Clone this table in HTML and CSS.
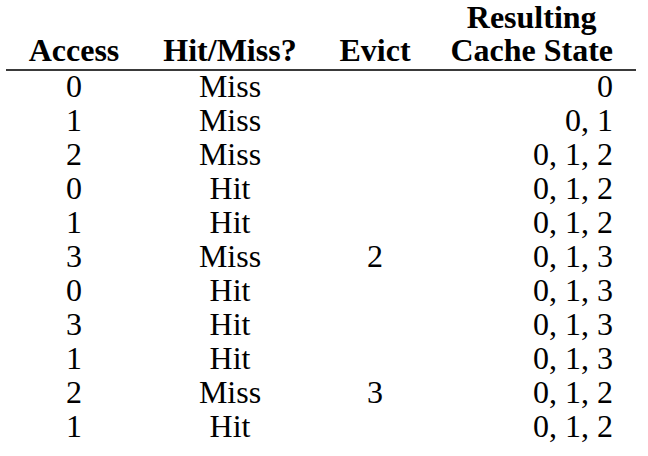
FILE: index.html
```html
<!DOCTYPE html>
<html>
<head>
<meta charset="utf-8">
<link rel="stylesheet" href="styles.css">
</head>
<body>
<div class="table">
  <div class="row head">
    <div class="cell">Access</div>
    <div class="cell">Hit/Miss?</div>
    <div class="cell">Evict</div>
    <div class="cell state"><span class="stack">Resulting<br>Cache State</span></div>
  </div>
  <div class="row"><div class="cell">0</div><div class="cell">Miss</div><div class="cell"></div><div class="cell state">0</div></div>
  <div class="row"><div class="cell">1</div><div class="cell">Miss</div><div class="cell"></div><div class="cell state">0, 1</div></div>
  <div class="row"><div class="cell">2</div><div class="cell">Miss</div><div class="cell"></div><div class="cell state">0, 1, 2</div></div>
  <div class="row"><div class="cell">0</div><div class="cell">Hit</div><div class="cell"></div><div class="cell state">0, 1, 2</div></div>
  <div class="row"><div class="cell">1</div><div class="cell">Hit</div><div class="cell"></div><div class="cell state">0, 1, 2</div></div>
  <div class="row"><div class="cell">3</div><div class="cell">Miss</div><div class="cell">2</div><div class="cell state">0, 1, 3</div></div>
  <div class="row"><div class="cell">0</div><div class="cell">Hit</div><div class="cell"></div><div class="cell state">0, 1, 3</div></div>
  <div class="row"><div class="cell">3</div><div class="cell">Hit</div><div class="cell"></div><div class="cell state">0, 1, 3</div></div>
  <div class="row"><div class="cell">1</div><div class="cell">Hit</div><div class="cell"></div><div class="cell state">0, 1, 3</div></div>
  <div class="row"><div class="cell">2</div><div class="cell">Miss</div><div class="cell">3</div><div class="cell state">0, 1, 2</div></div>
  <div class="row"><div class="cell">1</div><div class="cell">Hit</div><div class="cell"></div><div class="cell state">0, 1, 2</div></div>
</div>
</body>
</html>
```
FILE: styles.css
```css
html, body {
  margin: 0;
  padding: 0;
  background: #ffffff;
}
body {
  font-family: "Liberation Serif", "Times New Roman", serif;
  font-size: 32px;
  color: #000000;
}
.table {
  margin: 0 12px 0 6px;
  width: 630px;
}
.row {
  display: grid;
  grid-template-columns: 136px 176px 114px 204px;
  line-height: 30px;
  padding-bottom: 4px;
}
.row.head {
  font-weight: bold;
  line-height: 33px;
  align-items: end;
  padding-top: 1px;
  padding-bottom: 2px;
  border-bottom: 2px solid #3a3a3a;
}
.cell {
  text-align: center;
  white-space: nowrap;
}
.cell.state {
  text-align: right;
  padding-right: 23px;
}
.stack {
  display: inline-block;
  text-align: center;
}
```
